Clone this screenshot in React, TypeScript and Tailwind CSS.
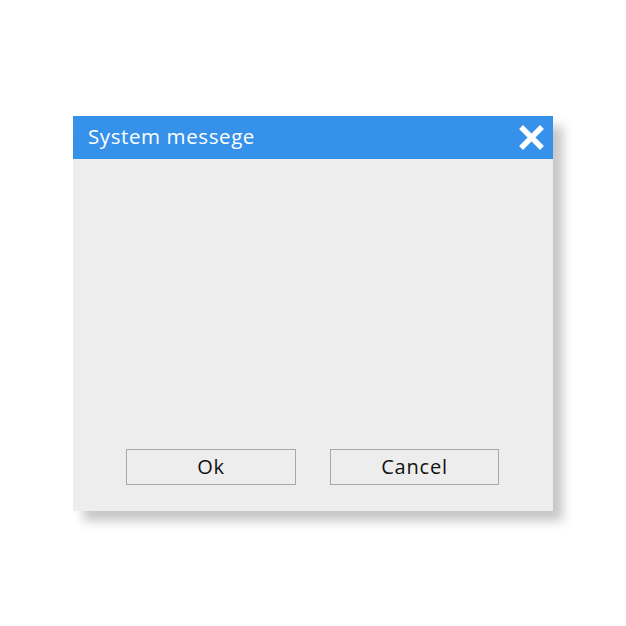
import React from "react";

export default function App() {
  return (
    <div className="w-[626px] h-[626px] bg-white flex items-center justify-center" style={{ fontFamily: "'Open Sans', 'Noto Sans', sans-serif" }}>
      <div className="w-[480px] h-[395px] flex flex-col bg-[#ededed] shadow-[10px_10px_10px_rgba(0,0,0,0.22)]">
        <div className="h-[43px] bg-[#3591ea] flex items-center justify-between pl-[15px] pr-[9px]">
          <span className="text-white text-[20.5px] leading-none tracking-[0.6px] mt-[-2px]">System messege</span>
          <svg width="25" height="25" viewBox="0 0 25 25">
            <path d="M4 4 L21 21 M21 4 L4 21" stroke="#ffffff" strokeWidth="5.5" strokeLinecap="square" />
          </svg>
        </div>
        <div className="flex-1 flex items-end justify-between pl-[53px] pr-[54px] pb-[26px]">
          <button className="w-[170px] h-[36px] border border-[#a8a8a8] bg-[#ededed] text-[20px] tracking-[0.8px] text-[#111] leading-none">Ok</button>
          <button className="w-[169px] h-[36px] border border-[#a8a8a8] bg-[#ededed] text-[20px] tracking-[0.8px] text-[#111] leading-none">Cancel</button>
        </div>
      </div>
    </div>
  );
}
